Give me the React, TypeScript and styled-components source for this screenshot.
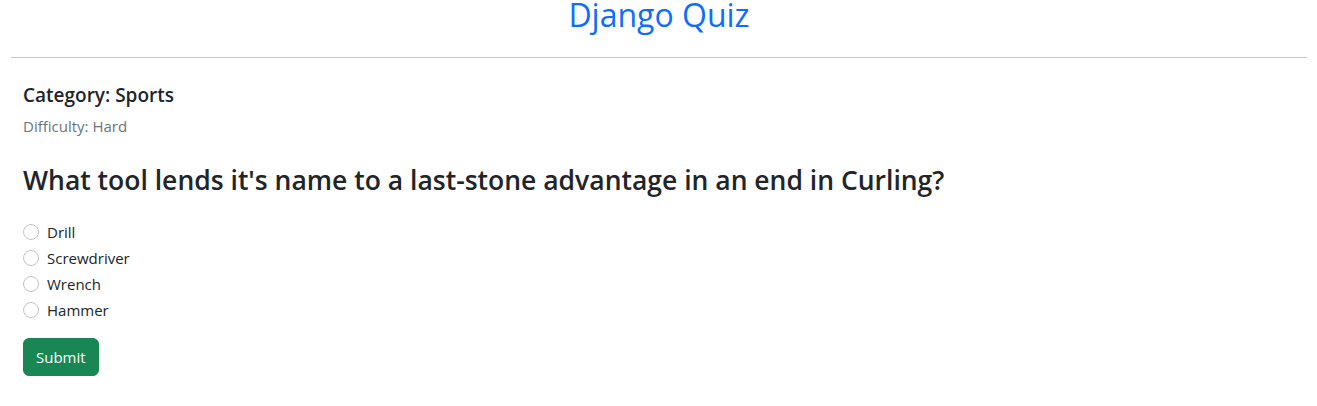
import React from "react";
import styled, { createGlobalStyle } from "styled-components";

const Global = createGlobalStyle`
  html, body { margin: 0; padding: 0; background: #fff; }
  body {
    font-family: "Open Sans", "Noto Sans", sans-serif;
    color: #212529;
    -webkit-font-smoothing: antialiased;
  }
`;

const Page = styled.div`
  padding: 0 10px 0 11px;
`;

const Title = styled.h1`
  margin: -4px 0 0;
  font-size: 32px;
  font-weight: 500;
  line-height: 38px;
  text-align: center;
  color: #0d6efd;
`;

const Rule = styled.hr`
  margin: 23px 0 0;
  border: 0;
  border-top: 1px solid #c8c9ca;
`;

const Content = styled.main`
  padding: 0 12px;
  display: flex;
  flex-direction: column;
  align-items: flex-start;
`;

const Category = styled.h5`
  margin: 25px 0 0;
  font-size: 19px;
  font-weight: 600;
  line-height: 24px;
`;

const Difficulty = styled.p`
  margin: 7px 0 0;
  font-size: 15px;
  line-height: 24px;
  color: #6c757d;
`;

const Question = styled.h3`
  margin: 25px 0 0;
  font-size: 26.5px;
  font-weight: 600;
  line-height: 34px;
`;

const Options = styled.form`
  margin-top: 23px;
  display: flex;
  flex-direction: column;
  align-items: flex-start;
`;

const OptionRow = styled.label`
  display: flex;
  align-items: center;
  gap: 8px;
  height: 24px;
  margin-bottom: 2px;
  font-size: 15px;
  line-height: 24px;
  cursor: pointer;
`;

const Radio = styled.input.attrs({ type: "radio" })`
  appearance: none;
  margin: 0;
  width: 16px;
  height: 16px;
  border-radius: 50%;
  border: 1px solid #c2c3c4;
  background: #fff;
  flex: none;
`;

const SubmitButton = styled.button`
  margin-top: 14px;
  height: 38px;
  padding: 0 12px;
  border: 1px solid #198754;
  border-radius: 6px;
  background: #198754;
  color: #fff;
  font-family: inherit;
  font-size: 15px;
  line-height: 24px;
  cursor: pointer;
`;

const choices = ["Drill", "Screwdriver", "Wrench", "Hammer"];

export default function App() {
  return (
    <Page>
      <Global />
      <Title>Django Quiz</Title>
      <Rule />
      <Content>
        <Category>Category: Sports</Category>
        <Difficulty>Difficulty: Hard</Difficulty>
        <Question>What tool lends it's name to a last-stone advantage in an end in Curling?</Question>
        <Options onSubmit={(e) => e.preventDefault()}>
          {choices.map((c) => (
            <OptionRow key={c}>
              <Radio name="answer" value={c} />
              {c}
            </OptionRow>
          ))}
          <SubmitButton type="submit">Submit</SubmitButton>
        </Options>
      </Content>
    </Page>
  );
}
